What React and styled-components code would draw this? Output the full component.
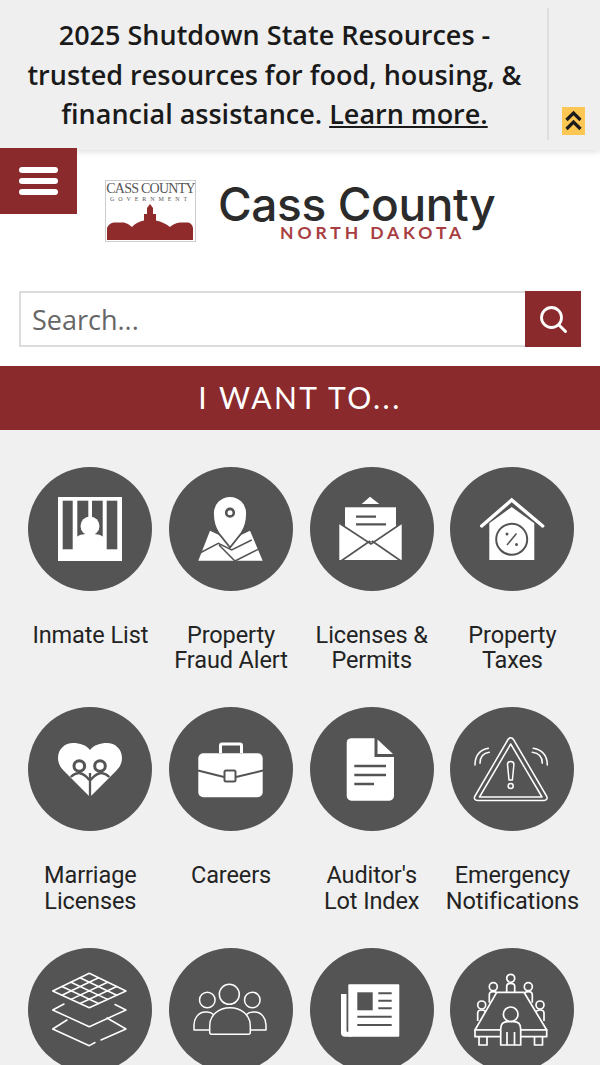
import React from 'react';
import styled, { createGlobalStyle } from 'styled-components';

const GlobalStyle = createGlobalStyle`
  html, body {
    margin: 0;
    padding: 0;
    background: #f0f0f0;
  }
  body {
    width: 600px;
    height: 1065px;
    overflow: hidden;
    font-family: "Open Sans", sans-serif;
  }
`;

const maroon = '#8a2a2c';
const dark = '#545454';

const Banner = styled.div`
  position: relative;
  z-index: 1;
  display: flex;
  height: 150px;
  box-sizing: border-box;
  padding-top: 8px;
  background: #efefef;
  box-shadow: 0 2px 6px rgba(0, 0, 0, 0.12);
`;

const BannerText = styled.p`
  width: 549px;
  height: 132px;
  box-sizing: border-box;
  margin: 0;
  padding: 7px 0 0 2px;
  border-right: 2px solid #dedede;
  text-align: center;
  font-size: 27px;
  font-weight: 600;
  line-height: 39.5px;
  color: #1a1a1a;

  a {
    color: inherit;
    text-decoration: underline;
  }
`;

const BannerToggle = styled.div`
  width: 23px;
  height: 28px;
  margin: 99px 0 0 13px;
  background: #fdc753;
`;

const Header = styled.header`
  display: flex;
  align-items: flex-start;
  height: 141px;
  background: #fff;
`;

const MenuButton = styled.div`
  position: relative;
  z-index: 2;
  display: flex;
  flex-direction: column;
  gap: 5px;
  align-items: center;
  justify-content: center;
  width: 77px;
  height: 66px;
  margin-top: -2px;
  background: ${maroon};
`;

const MenuBar = styled.span`
  width: 39px;
  height: 6px;
  border-radius: 3px;
  background: #fff;
`;

const Seal = styled.div`
  width: 91px;
  height: 62px;
  box-sizing: border-box;
  margin: 30px 0 0 28px;
  padding-top: 1px;
  border: 1px solid #ccc;
  background: #fff;
  overflow: hidden;
  text-align: center;
  font-family: "Liberation Serif", serif;
  color: #555;
`;

const SealTitle = styled.div`
  font-size: 14px;
  line-height: 13px;
  letter-spacing: -0.75px;
  white-space: nowrap;
`;

const SealSub = styled.div`
  font-size: 6px;
  line-height: 8px;
  letter-spacing: 3.9px;
  white-space: nowrap;
`;

const SealSkyline = styled.svg`
  display: block;
`;

const Wordmark = styled.div`
  margin: 34px 0 0 22px;
`;

const WordmarkName = styled.div`
  font-family: Inter, sans-serif;
  font-size: 46px;
  font-weight: 500;
  line-height: 40px;
  letter-spacing: -0.4px;
  color: #2b2b2b;
  white-space: nowrap;
`;

const WordmarkState = styled.div`
  margin-left: 62px;
  font-family: Lato, sans-serif;
  font-size: 17.5px;
  font-weight: 700;
  line-height: 18px;
  letter-spacing: 3.9px;
  color: #a83e42;
  white-space: nowrap;
`;

const SearchSection = styled.div`
  display: flex;
  height: 75px;
  box-sizing: border-box;
  padding: 0 19px 19px;
  background: #fff;
`;

const SearchInput = styled.input`
  flex: 1;
  min-width: 0;
  box-sizing: border-box;
  padding: 0 11px;
  border: 2px solid #dcdcdc;
  border-right: 0;
  border-radius: 0;
  outline: none;
  background: #fff;
  font-family: "Open Sans", sans-serif;
  font-size: 27px;

  &::placeholder {
    color: #666;
    opacity: 1;
  }
`;

const SearchButton = styled.div`
  display: flex;
  align-items: center;
  justify-content: center;
  width: 56px;
  background: ${maroon};
`;

const WantBar = styled.div`
  height: 64px;
  background: ${maroon};
  text-align: center;
  font-family: Lato, sans-serif;
  font-size: 30px;
  line-height: 63px;
  letter-spacing: 2.5px;
  color: #fff;
`;

const Grid = styled.div`
  display: grid;
  grid-template-columns: repeat(4, 140.7px);
  grid-auto-rows: 240.5px;
  padding: 36.8px 0 0 20px;
  background: #f0f0f0;
`;

const Tile = styled.a`
  display: flex;
  flex-direction: column;
  align-items: center;
  text-align: center;
  font-family: Roboto, sans-serif;
  font-size: 23.5px;
  line-height: 25.5px;
  letter-spacing: -0.1px;
  color: #232323;
`;

const Circle = styled.div`
  flex: none;
  width: 124px;
  height: 124px;
  margin-bottom: 32px;
  border-radius: 50%;
  background: ${dark};
`;

const IconSvg = styled.svg`
  display: block;
`;

const Icon = ({ children }) => (
  <IconSvg width="124" height="124" viewBox="0 0 124 124">{children}</IconSvg>
);

const InmateIcon = () => (
  <Icon>
    <rect x="30" y="30" width="64" height="64" fill="#fff" />
    <g fill={dark}>
      <rect x="34.7" y="33.7" width="10" height="48.6" />
      <rect x="49.3" y="33.7" width="11" height="36" />
      <rect x="64" y="33.7" width="10.7" height="36" />
      <rect x="78.7" y="33.7" width="10.6" height="48.6" />
    </g>
    <circle cx="62" cy="59" r="9.5" fill="#fff" />
    <path d="M49 82V70c3-3 7-3 13-3s10 0 13 3v12z" fill="#fff" />
  </Icon>
);

const PinIcon = () => (
  <Icon>
    <path d="M29.300 93.700 41 63.700 50 68 61 80 72 68 81 63.700 93.700 93.700z" fill="#fff" />
    <path d="M29 87l20.300-10.700 13.400 6.700 20-10M50 78l16 16 23-11.700" fill="none" stroke={dark} strokeWidth="1.500" />
    <path d="M61 80.500 49.500 66C46 61 44 53 44 46a17 17 0 0 1 34 0c0 7-2 15-5.500 20z" fill="#fff" stroke={dark} strokeWidth="1.800" />
    <circle cx="61" cy="45.700" r="3.800" fill="#fff" stroke={dark} strokeWidth="2.600" />
  </Icon>
);

const EnvelopeIcon = () => (
  <Icon>
    <path d="M51.7 37 60 29.7 69.3 37z" fill="#fff" />
    <rect x="35" y="40.3" width="51" height="34" fill="#fff" />
    <path d="M46 49.7h20M46 57.3h30" stroke={dark} strokeWidth="2.200" />
    <path d="M29.3 55.7 60 76l31.7-20.3V93H29.3z" fill="#fff" />
    <path d="M29 56l32 21 31-21M31 94l29-20M91 94 62 74" fill="none" stroke={dark} strokeWidth="1.600" />
  </Icon>
);

const HouseIcon = () => (
  <Icon>
    <path d="M39.3 93V56.3L61.7 40l22.6 16.3V93z" fill="#fff" />
    <path d="M31.7 59 61.7 33l31 26" fill="none" stroke="#fff" strokeWidth="3.4" strokeLinecap="round" />
    <circle cx="61.7" cy="72.300" r="15.500" fill="#fff" stroke={dark} strokeWidth="2" />
    <path d="M66.500 66.500l-9.500 11.500" stroke={dark} strokeWidth="1.500" />
    <circle cx="57" cy="67" r="1.500" fill={dark} />
    <circle cx="66.500" cy="77.500" r="1.500" fill={dark} />
  </Icon>
);

const HeartIcon = () => (
  <Icon>
    <path d="M62 90 36 64c-4-4-6-8-6-13 0-9 7-15 15-15 7 0 13 2 17 7 4-5 10-7 17-7 8 0 15 6 15 15 0 5-2 9-6 13z" fill="#fff" />
    <circle cx="51.300" cy="59" r="5.300" fill="#fff" stroke={dark} strokeWidth="3" />
    <circle cx="72" cy="59" r="5.300" fill="#fff" stroke={dark} strokeWidth="3" />
    <path d="M42.700 70Q52 61 61.300 73M81.300 70Q72 61 62.700 73M62 66V90" fill="none" stroke={dark} strokeWidth="2.300" />
  </Icon>
);

const CaseIcon = () => (
  <Icon>
    <path d="M51.5 46V38.5q0-1.500 1.500-1.500h18q1.500 0 1.500 1.500V46" fill="none" stroke="#fff" strokeWidth="3" />
    <rect x="29.3" y="46.3" width="64.4" height="44" rx="5" fill="#fff" />
    <path d="M29 63.500 55 70M67 70l27-6.500" stroke={dark} strokeWidth="2" />
    <rect x="55.500" y="63.500" width="11" height="11" rx="1.500" fill="#fff" stroke={dark} strokeWidth="2" />
  </Icon>
);

const DocIcon = () => (
  <Icon>
    <path d="M41 31.300h23.500V50h19.500v39a4.700 4.700 0 0 1-4.700 4.700H41.400a4.700 4.700 0 0 1-4.700-4.700V36a4.700 4.700 0 0 1 4.300-4.700z" fill="#fff" />
    <path d="M67.500 32.500 83 47H67.500z" fill="#fff" />
    <path d="M44.300 59H76M44.300 68H76M44.300 77H64" stroke={dark} strokeWidth="2.400" />
  </Icon>
);

const AlertIcon = () => (
  <Icon>
    <g fill="none" stroke="#fff" strokeLinejoin="round" strokeLinecap="round">
      <path d="M58 32.500c1.500-2.500 4-2.500 5.500 0L96.500 89c1.500 2.500 0 4.500-2.500 4.500H27.500c-2.500 0-4-2-2.500-4.500z" strokeWidth="1.500" />
      <path d="M60.700 37 29.500 90h62.500z" strokeWidth="1.500" />
      <path d="M57.500 57.500q0-3 3.200-3t3.200 3l-1.500 15.500h-3.400z" strokeWidth="1.500" />
      <circle cx="60.700" cy="79" r="2.500" strokeWidth="1.500" />
      <path d="M25 58Q25 44 38.300 41.300M30 56.300Q30 46.500 39.300 45.300M97.300 58Q97.300 44 83.300 41.300M92.300 56.300Q92.300 46.500 82.300 45.300" strokeWidth="1.500" />
    </g>
  </Icon>
);

const LayersIcon = () => (
  <Icon>
    <g fill="none" stroke="#fff" strokeWidth="1.500" strokeLinejoin="round" strokeLinecap="round">
      <path d="M61.300 25.300 98 43 61.300 59.700 24.700 43z" />
      <path d="M52 29.800 88.800 47.200M43 34.200 79.600 51.400M34 38.500 70.500 55.500M70.600 29.800 33.900 47.200M79.600 34.200 43 51.400M88.800 38.500 52 55.500" />
      <path d="M36 56 24.700 62 61.300 78.700 98 62 87 56.500" />
      <path d="M39 72 24.700 81 61.300 97.700 67 94.500M73 92 98 81 79 70" />
    </g>
  </Icon>
);

const PeopleIcon = () => (
  <Icon>
    <g fill="none" stroke="#fff" strokeWidth="1.500" strokeLinejoin="round">
      <circle cx="60.300" cy="46.300" r="10" />
      <circle cx="38.300" cy="52" r="7.800" />
      <circle cx="83.300" cy="52" r="7.800" />
      <path d="M42.700 86.300h36.600a2 2 0 0 0 2-2V78c0-11-9-18.300-20.300-18.300S40.700 67 40.700 78v6.300a2 2 0 0 0 2 2z" />
      <path d="M40.700 82H25v-5c0-7 5-13 11-13h2c3 0 5 1 6.500 2.500M81.300 82H97v-5c0-7-5-13-11-13h-2c-3 0-5 1-6.500 2.500" />
    </g>
  </Icon>
);

const NewsIcon = () => (
  <Icon>
    <path d="M31 46h5.500v36.500q0 1.500 2 1.500h3v4.700H35q-4 0-4-4z" fill="#fff" />
    <rect x="38.300" y="36.300" width="51" height="52.400" rx="1" fill="#fff" />
    <rect x="47.300" y="44.300" width="15.400" height="18" fill={dark} />
    <path d="M68.300 45.300h13.400M68.300 52.700h13.400M68.300 60.300h13.400M47.300 68.700h34.400M47.300 77h34.400" stroke={dark} strokeWidth="2" />
  </Icon>
);

const Seat = ({ x, y }) => (
  <g>
    <circle cx={x} cy={y} r="4" />
    <path d={`M${x - 4} ${y + 16}v-8q0-3 4-3t4 3v8`} />
  </g>
);

const MeetingIcon = () => (
  <Icon>
    <g fill="none" stroke="#fff" strokeWidth="1.700" strokeLinejoin="round">
      <Seat x={60.700} y={30.300} />
      <Seat x={43.300} y={38.700} />
      <Seat x={78.300} y={38.700} />
      <Seat x={31.700} y={57} />
      <Seat x={90} y={57} />
      <path d="M46.700 44.300H74L96.700 82H25z" fill={dark} />
      <rect x="25" y="82" width="71.700" height="6.700" fill={dark} />
      <path d="M29 88.700v8.300h8v-8.300M84.500 88.700v8.300h8v-8.300" />
      <circle cx="60.700" cy="66.300" r="7.300" />
      <path d="M50.700 97V81q0-7.300 7-7.300h6q7 0 7 7.300v16zM57 97V84M64.500 97V84" fill={dark} />
    </g>
  </Icon>
);

const tiles = [
  { label: 'Inmate List', icon: <InmateIcon /> },
  { label: <>Property<br />Fraud Alert</>, icon: <PinIcon /> },
  { label: <>Licenses &amp;<br />Permits</>, icon: <EnvelopeIcon /> },
  { label: <>Property<br />Taxes</>, icon: <HouseIcon /> },
  { label: <>Marriage<br />Licenses</>, icon: <HeartIcon /> },
  { label: 'Careers', icon: <CaseIcon /> },
  { label: <>Auditor's<br />Lot Index</>, icon: <DocIcon /> },
  { label: <>Emergency<br />Notifications</>, icon: <AlertIcon /> },
  { icon: <LayersIcon /> },
  { icon: <PeopleIcon /> },
  { icon: <NewsIcon /> },
  { icon: <MeetingIcon /> },
];

const App = () => (
  <>
    <GlobalStyle />
    <Banner>
      <BannerText>
        2025 Shutdown State Resources -<br />
        trusted resources for food, housing, &amp;<br />
        financial assistance. <a href="#more">Learn more.</a>
      </BannerText>
      <BannerToggle>
        <svg width="23" height="28" viewBox="0 0 23 28">
          <path d="M4.500 13 11.500 6l7 7M4.500 22l7-7 7 7" fill="none" stroke="#1c1c1c" strokeWidth="3.200" />
        </svg>
      </BannerToggle>
    </Banner>
    <Header>
      <MenuButton>
        <MenuBar />
        <MenuBar />
        <MenuBar />
      </MenuButton>
      <Seal>
        <SealTitle>CASS COUNTY</SealTitle>
        <SealSub>GOVERNMENT</SealSub>
        <SealSkyline width="89" height="38" viewBox="0 0 89 38">
          <path d="M1 37V25Q3 20 8 19.500H18Q22 20 26 24Q30 19 38 17.500V11H41V5L44 1L47 5V11H50V17.500Q58 19 64 24Q68 20 74 19.500H82Q86 20 87 25V37Z" fill="#8f2b2a" />
        </SealSkyline>
      </Seal>
      <Wordmark>
        <WordmarkName>Cass County</WordmarkName>
        <WordmarkState>NORTH DAKOTA</WordmarkState>
      </Wordmark>
    </Header>
    <SearchSection>
      <SearchInput placeholder="Search..." readOnly />
      <SearchButton>
        <svg width="30" height="30" viewBox="0 0 30 30">
          <circle cx="13.500" cy="13.500" r="10" fill="none" stroke="#fff" strokeWidth="2.800" />
          <path d="M21 21l6.500 6.500" stroke="#fff" strokeWidth="3" strokeLinecap="round" />
        </svg>
      </SearchButton>
    </SearchSection>
    <WantBar>I WANT TO...</WantBar>
    <Grid>
      {tiles.map((tile, i) => (
        <Tile key={i}>
          <Circle>{tile.icon}</Circle>
          {tile.label && <div>{tile.label}</div>}
        </Tile>
      ))}
    </Grid>
  </>
);

export default App;
